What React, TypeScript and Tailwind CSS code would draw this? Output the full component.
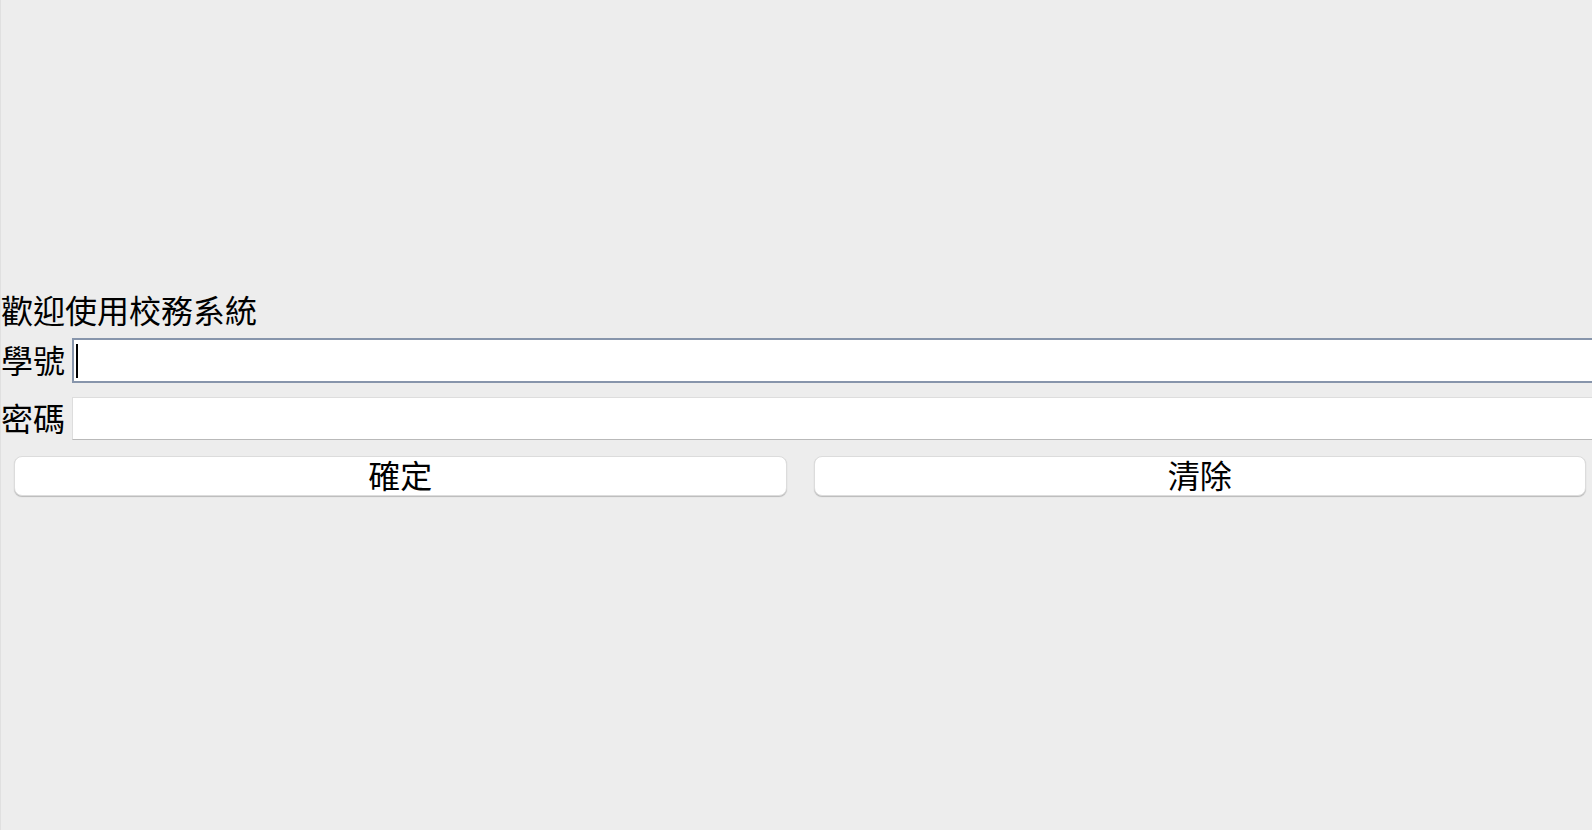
const fontStack = { fontFamily: '"Noto Sans CJK TC", "Noto Sans", sans-serif' }

function Field({ label, focused }: { label: string; focused?: boolean }) {
  return (
    <div className="flex items-center">
      <label className="w-[71px] shrink-0 text-[32px] leading-none text-black pb-[3px]">{label}</label>
      {focused ? (
        <div className="relative flex-1 -mr-3 h-[45px] bg-white border-2 border-[#8795ab]">
          <input className="w-full h-full bg-transparent outline-none px-1" />
          <span className="absolute left-[2px] top-[4px] w-[2px] h-[34px] bg-black" />
        </div>
      ) : (
        <input
          type="password"
          className="flex-1 -mr-3 h-[43px] bg-white border border-[#dddddd] border-b-[#b9b9b9] outline-none px-1"
        />
      )}
    </div>
  )
}

export default function App() {
  return (
    <div
      className="min-h-[830px] bg-[#ededed] border-l border-[#e0e0e0] overflow-hidden pt-[289px]"
      style={fontStack}
    >
      <h1 className="text-[32px] leading-[40px] font-normal text-black whitespace-nowrap">歡迎使用校務系統</h1>
      <div className="mt-[9px] flex flex-col gap-[14px]">
        <Field label="學號" focused />
        <Field label="密碼" />
      </div>
      <div className="mt-[16px] flex gap-[27px] pl-[13px] pr-[6px]">
        <button className="flex-1 h-[40px] pb-[4px] bg-white rounded-[8px] border border-[#dcdcdc] shadow-[0_1px_1px_rgba(0,0,0,0.22)] text-[32px] leading-none text-black">
          確定
        </button>
        <button className="flex-1 h-[40px] pb-[4px] bg-white rounded-[8px] border border-[#dcdcdc] shadow-[0_1px_1px_rgba(0,0,0,0.22)] text-[32px] leading-none text-black">
          清除
        </button>
      </div>
    </div>
  )
}
